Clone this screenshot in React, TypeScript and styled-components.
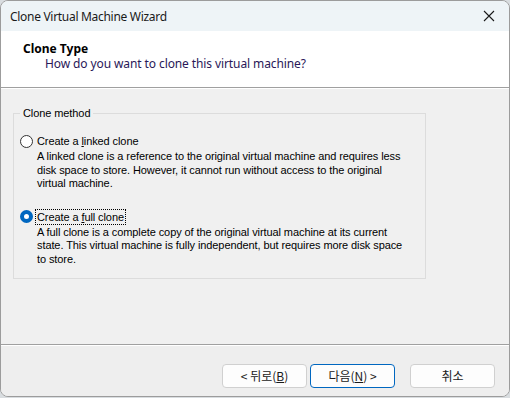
import { createGlobalStyle, styled } from "styled-components";

const GlobalStyle = createGlobalStyle`
  html, body {
    margin: 0;
    padding: 0;
    background: #d9dde0;
  }
`;

const options = [
  {
    label: "Create a ",
    key: "l",
    rest: "inked clone",
    desc: "A linked clone is a reference to the original virtual machine and requires less disk space to store. However, it cannot run without access to the original virtual machine.",
    checked: false,
  },
  {
    label: "Create a ",
    key: "f",
    rest: "ull clone",
    desc: "A full clone is a complete copy of the original virtual machine at its current state. This virtual machine is fully independent, but requires more disk space to store.",
    checked: true,
  },
];

export default function App() {
  return (
    <>
      <GlobalStyle />
      <Window>
        <TitleBar>
          <TitleText>Clone Virtual Machine Wizard</TitleText>
          <CloseIcon width="12" height="12" viewBox="0 0 12 12">
            <path d="M1 1 L11 11 M11 1 L1 11" stroke="#1a1a1a" strokeWidth="1.1" />
          </CloseIcon>
        </TitleBar>
        <Header>
          <HeaderTitle>Clone Type</HeaderTitle>
          <HeaderSub>How do you want to clone this virtual machine?</HeaderSub>
        </Header>
        <Body>
          <GroupBox>
            <Legend>Clone method</Legend>
            {options.map((o) => (
              <Option key={o.key}>
                <RadioRow>
                  <Radio $checked={o.checked} />
                  <RadioLabel $focused={o.checked}>
                    {o.label}
                    <u>{o.key}</u>
                    {o.rest}
                  </RadioLabel>
                </RadioRow>
                <Desc>{o.desc}</Desc>
              </Option>
            ))}
          </GroupBox>
        </Body>
        <Footer>
          <Button>
            &lt; 뒤로(<u>B</u>)
          </Button>
          <Button $primary>
            다음(<u>N</u>) &gt;
          </Button>
          <CancelButton>취소</CancelButton>
        </Footer>
      </Window>
    </>
  );
}

const Window = styled.div`
  width: 508px;
  height: 395px;
  border: 1px solid #9c9c9c;
  border-radius: 8px;
  overflow: hidden;
  display: flex;
  flex-direction: column;
  background: #f0f0f0;
  font-family: "Noto Sans", "Noto Sans CJK KR", sans-serif;
`;

const TitleBar = styled.div`
  height: 30px;
  flex: none;
  display: flex;
  align-items: center;
  justify-content: space-between;
  padding: 0 14px 0 9px;
  background: #eef4f7;
`;

const TitleText = styled.div`
  font-size: 12px;
  letter-spacing: -0.3px;
  color: #1a1a1a;
`;

const CloseIcon = styled.svg`
  display: block;
`;

const Header = styled.div`
  height: 57px;
  flex: none;
  background: #ffffff;
  padding: 10px 0 0 22px;
  box-sizing: border-box;
  border-bottom: 1px solid #a0a0a0;
  box-shadow: 0 1px 0 #ffffff;
`;

const HeaderTitle = styled.div`
  font-size: 12px;
  font-weight: 700;
  color: #000;
  line-height: 15px;
`;

const HeaderSub = styled.div`
  font-size: 12px;
  letter-spacing: -0.1px;
  color: #2a1858;
  line-height: 15px;
  padding-left: 22px;
`;

const Body = styled.div`
  flex: 1;
  padding: 25px 0 0 12px;
  font-family: "Liberation Sans", "DejaVu Sans", sans-serif;
  font-size: 11px;
  letter-spacing: -0.09px;
  color: #000;
`;

const GroupBox = styled.div`
  position: relative;
  width: 413px;
  height: 166px;
  box-sizing: border-box;
  border: 1px solid #dcdcdc;
  padding: 18px 0 0 6px;
`;

const Legend = styled.div`
  position: absolute;
  top: -7px;
  left: 6px;
  padding: 0 3px;
  background: #f0f0f0;
  line-height: 13px;
`;

const Option = styled.div`
  margin-top: 1px;
  margin-bottom: 18px;
`;

const RadioRow = styled.div`
  display: flex;
  align-items: center;
  height: 16px;
`;

const Radio = styled.span<{ $checked?: boolean }>`
  width: 13px;
  height: 13px;
  box-sizing: border-box;
  border-radius: 50%;
  border: ${(p) => (p.$checked ? "4px solid #0067c0" : "1px solid #333")};
  background: #fff;
  margin-right: 3px;
`;

const RadioLabel = styled.span<{ $focused?: boolean }>`
  outline: ${(p) => (p.$focused ? "1px dotted #000" : "none")};
  padding: 0 1px;
  line-height: 14px;
`;

const Desc = styled.div`
  padding-left: 17px;
  width: 372px;
  line-height: 13.5px;
  margin-top: 1px;
`;

const Footer = styled.div`
  height: 52px;
  flex: none;
  border-top: 1px solid #a0a0a0;
  box-shadow: inset 0 1px 0 #ffffff;
  background: #eeeeee;
  display: flex;
  align-items: flex-start;
  padding: 19px 0 0 221px;
  box-sizing: border-box;
  gap: 3px;
`;

const Button = styled.button<{ $primary?: boolean }>`
  width: 85px;
  height: 24px;
  box-sizing: border-box;
  border-radius: 4px;
  border: 1px solid ${(p) => (p.$primary ? "#0067c0" : "#d0d0d0")};
  background: #fdfdfd;
  font-family: "Noto Sans CJK KR", "Noto Sans", sans-serif;
  font-size: 12px;
  color: #1a1a1a;
  padding: 0;
  line-height: 20px;
`;

const CancelButton = styled(Button)`
  margin-left: 12px;
`;
